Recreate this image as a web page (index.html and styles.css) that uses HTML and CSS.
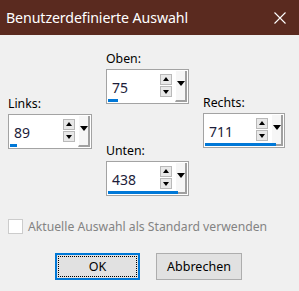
FILE: index.html
```html
<!DOCTYPE html>
<html lang="de">

<head>
    <meta charset="UTF-8">
    <meta name="viewport" content="width=device-width, initial-scale=1.0">

    <title>Benutzerdefinierte Auswahl</title>

    <link rel="stylesheet" href="styles.css">
</head>

<body>
    <div class="window">
        <div class="titlebar">
            <span class="title">Benutzerdefinierte Auswahl</span>
            <svg class="close" width="12" height="12" viewBox="0 0 12 12">
                <path d="M0.5 0.5 L11.5 11.5 M11.5 0.5 L0.5 11.5" stroke="#ffffff" stroke-width="1.1" fill="none"/>
            </svg>
        </div>

        <div class="content">
            <div class="fields">
                <!-- Left column -->
                <div class="col col-left">
                    <div class="label">Links:</div>
                    <div class="spin">
                        <div class="value">89</div>
                        <div class="arrows">
                            <div class="arrow up"></div>
                            <div class="arrow down"></div>
                        </div>
                        <div class="drop"></div>
                        <div class="bar" style="width: 7px;"></div>
                    </div>
                </div>

                <!-- Middle column -->
                <div class="col col-mid">
                    <div class="label">Oben:</div>
                    <div class="spin">
                        <div class="value">75</div>
                        <div class="arrows">
                            <div class="arrow up"></div>
                            <div class="arrow down"></div>
                        </div>
                        <div class="drop"></div>
                        <div class="bar" style="width: 10px;"></div>
                    </div>

                    <div class="label label-lower">Unten:</div>
                    <div class="spin">
                        <div class="value">438</div>
                        <div class="arrows">
                            <div class="arrow up"></div>
                            <div class="arrow down"></div>
                        </div>
                        <div class="drop"></div>
                        <div class="bar" style="width: 70px;"></div>
                    </div>
                </div>

                <!-- Right column -->
                <div class="col col-right">
                    <div class="label">Rechts:</div>
                    <div class="spin">
                        <div class="value">711</div>
                        <div class="arrows">
                            <div class="arrow up"></div>
                            <div class="arrow down"></div>
                        </div>
                        <div class="drop"></div>
                        <div class="bar" style="width: 71px;"></div>
                    </div>
                </div>
            </div>

            <div class="check">
                <span class="box"></span>
                <span class="check-text">Aktuelle Auswahl als Standard verwenden</span>
            </div>

            <div class="buttons">
                <div class="btn btn-default"><span class="focus">OK</span></div>
                <div class="btn">Abbrechen</div>
            </div>
        </div>
    </div>
</body>

</html>
```

FILE: styles.css
```css
/* General styles */
body {
    margin: 0;
    padding: 0;
    font-family: 'Noto Sans', 'Open Sans', sans-serif;
    background: #f0f0f0;
    color: #000000;
}

.window {
    width: 299px;
    height: 291px;
    background: #f0f0f0;
    overflow: hidden;
}

/* Title bar */
.titlebar {
    height: 35px;
    background: #5a2a1f;
    display: flex;
    align-items: center;
    justify-content: space-between;
    padding: 0 13px 0 6px;
    box-sizing: border-box;
}

.title {
    color: #ffffff;
    font-size: 14.2px;
    letter-spacing: -0.1px;
}

.close {
    display: block;
}

/* Content */
.content {
    padding: 0 0 0 8px;
}

.fields {
    display: flex;
    gap: 14px;
}

.col {
    display: flex;
    flex-direction: column;
}

.col-left {
    width: 84px;
    padding-top: 61px;
}

.col-mid {
    width: 83px;
    padding-top: 16px;
}

.col-right {
    width: 82px;
    padding-top: 60px;
}

.label {
    font-size: 12.3px;
    line-height: 16px;
    height: 16px;
    margin-bottom: 2px;
    color: #000000;
}

.label-lower {
    margin-top: 39px;
}

/* Spin control */
.spin {
    position: relative;
    height: 35px;
    box-sizing: border-box;
    border: 1px solid #a3a3a3;
    background: #ffffff;
    display: flex;
    align-items: flex-start;
    padding: 1px 1px 0 0;
}

.value {
    flex: 1;
    font-size: 14px;
    line-height: 16px;
    padding: 9px 0 0 5px;
    color: #1d1d3a;
}

.arrows {
    display: flex;
    flex-direction: column;
    gap: 1px;
    margin-top: 3px;
    margin-right: 3px;
}

.arrow {
    width: 12px;
    height: 11px;
    box-sizing: border-box;
    border: 1px solid #b9b9b9;
    background: #e8e8e8;
    position: relative;
}

.arrow::after {
    content: '';
    position: absolute;
    left: 2px;
    width: 0;
    height: 0;
    border-left: 3px solid transparent;
    border-right: 3px solid transparent;
}

.arrow.up::after {
    top: 2px;
    border-bottom: 4px solid #000000;
}

.arrow.down::after {
    top: 3px;
    border-top: 4px solid #000000;
}

.drop {
    width: 12px;
    height: 31px;
    box-sizing: border-box;
    background: #f6f6f6;
    border-left: 1px solid #ffffff;
    border-right: 2px solid #a0a0a0;
    border-bottom: 2px solid #a0a0a0;
    position: relative;
}

.drop::after {
    content: '';
    position: absolute;
    left: 1px;
    top: 10px;
    width: 0;
    height: 0;
    border-left: 4px solid transparent;
    border-right: 4px solid transparent;
    border-top: 5px solid #000000;
}

.bar {
    position: absolute;
    left: 1px;
    bottom: 1px;
    height: 3px;
    background: #0078d7;
}

/* Checkbox */
.check {
    display: flex;
    align-items: center;
    gap: 5px;
    margin-top: 22px;
}

.box {
    width: 15px;
    height: 15px;
    box-sizing: border-box;
    border: 1px solid #cccccc;
    background: #ffffff;
}

.check-text {
    font-size: 12.2px;
    color: #838383;
}

/* Buttons */
.buttons {
    display: flex;
    gap: 16px;
    margin-top: 18px;
    padding-left: 47px;
}

.btn {
    width: 86px;
    height: 27px;
    box-sizing: border-box;
    border: 1px solid #adadad;
    background: #e1e1e1;
    font-size: 12.5px;
    display: flex;
    align-items: center;
    justify-content: center;
}

.btn-default {
    width: 85px;
    border: 2px solid #0078d7;
    padding: 1px;
}

.focus {
    flex: 1;
    align-self: stretch;
    border: 1px dotted #000000;
    display: flex;
    align-items: center;
    justify-content: center;
}
```
